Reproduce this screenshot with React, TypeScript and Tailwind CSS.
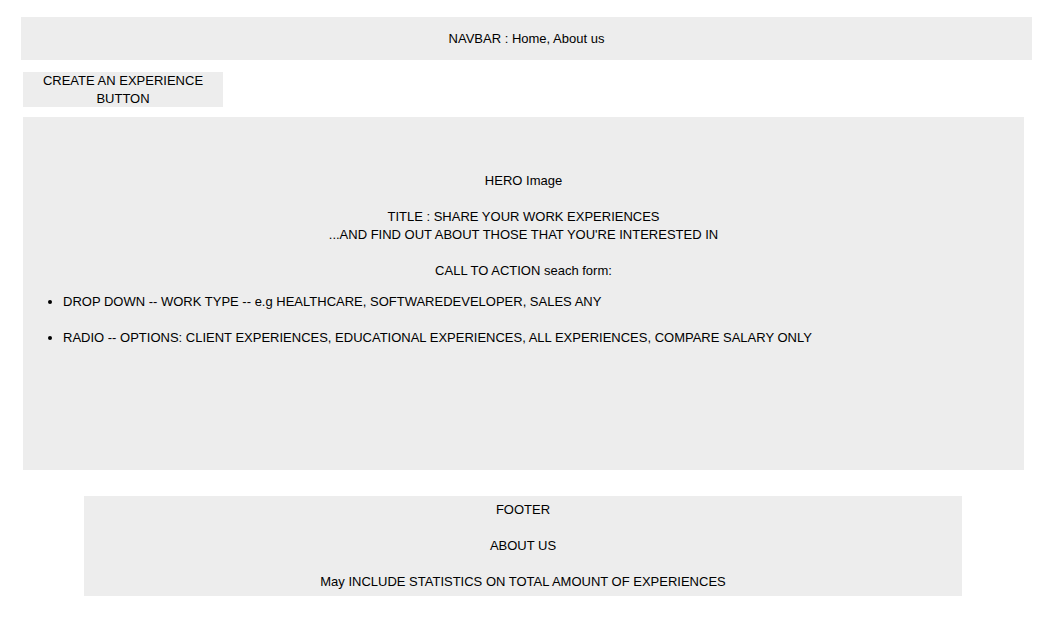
import React from "react";

const Gap = () => <div className="h-[18px]" />;

export default function App() {
  return (
    <div className="min-h-[625px] w-[1050px] bg-white text-[13px] leading-[18px] text-black font-['Liberation_Sans',Arial,sans-serif]">
      <nav className="ml-[21px] mt-[17px] flex h-[43px] w-[1011px] items-center justify-center bg-[#ededed]">
        NAVBAR : Home, About us
      </nav>

      <div className="ml-[23px] mt-[12px] flex h-[35px] w-[200px] flex-col items-center justify-center bg-[#ededed] pt-px text-center">
        <span>CREATE AN EXPERIENCE</span>
        <span>BUTTON</span>
      </div>

      <section
        id="hero"
        className="ml-[23px] mt-[10px] h-[353px] w-[1001px] bg-[#ededed] pt-[55px]"
      >
        <div className="text-center">
          <div>HERO Image</div>
          <Gap />
          <div>TITLE : SHARE YOUR WORK EXPERIENCES</div>
          <div>...AND FIND OUT ABOUT THOSE THAT YOU'RE INTERESTED IN</div>
          <Gap />
          <div>CALL TO ACTION seach form:</div>
        </div>
        <ul className="mt-[13px] list-disc pl-10">
          <li>DROP DOWN -- WORK TYPE -- e.g HEALTHCARE, SOFTWAREDEVELOPER, SALES ANY</li>
          <li className="mt-[18px]">
            RADIO -- OPTIONS: CLIENT EXPERIENCES, EDUCATIONAL EXPERIENCES, ALL EXPERIENCES, COMPARE SALARY ONLY
          </li>
        </ul>
      </section>

      <footer className="ml-[84px] mt-[26px] h-[100px] w-[878px] bg-[#ededed] pt-[5px] text-center">
        <div>FOOTER</div>
        <Gap />
        <div>ABOUT US</div>
        <Gap />
        <div>May INCLUDE STATISTICS ON TOTAL AMOUNT OF EXPERIENCES</div>
      </footer>
    </div>
  );
}
